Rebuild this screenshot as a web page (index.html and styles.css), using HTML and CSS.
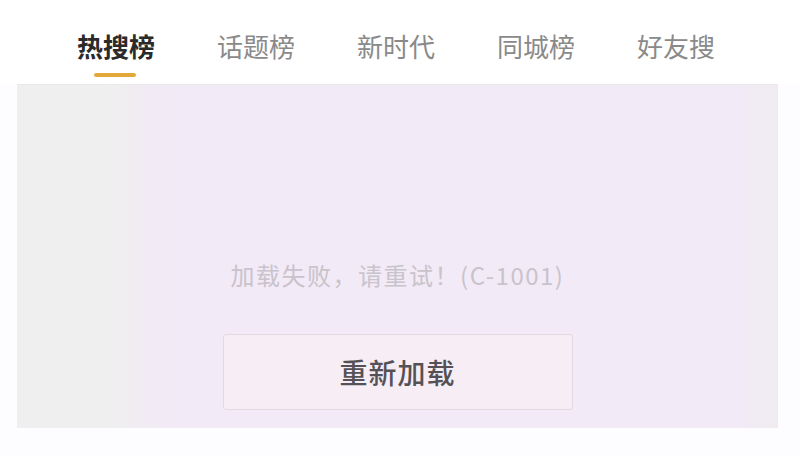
FILE: index.html
```html
<!DOCTYPE html>
<html>
<head>
    <title>热搜榜</title>
    <link rel="stylesheet" href="styles.css">
</head>
<body>
    <nav class="tabs">
        <a class="tab active">热搜榜</a>
        <a class="tab">话题榜</a>
        <a class="tab">新时代</a>
        <a class="tab">同城榜</a>
        <a class="tab">好友搜</a>
    </nav>

    <div class="panel">
        <p class="error">加载失败，请重试！(C-1001)</p>
        <button class="reload">重新加载</button>
    </div>
</body>
</html>
```

FILE: styles.css
```css
body { margin: 0; background: #fdfcfe; font-family: "Noto Sans CJK SC", "Noto Sans", sans-serif; width: 800px; height: 456px; overflow: hidden; }
.tabs { display: flex; padding: 0 0 0 46px; height: 84px; background: #fff; }
.tab { position: relative; width: 140px; text-align: center; font-size: 26px; line-height: 30px; padding-top: 31px; color: #8a8a8a; }
.tab.active { color: #2a2a2a; font-weight: bold; }
.tab.active::after { content: ""; position: absolute; left: 48px; top: 73px; width: 42px; height: 4px; border-radius: 2px; background: #e2a93a; }
.panel { margin: 0 22px 0 17px; height: 344px; background: linear-gradient(to right, #efefef 0, #efefef 90px, #f2eaf6 150px, #f2eaf6 720px, #efecf0 761px); border-top: 1px solid #e9e7ea; box-sizing: border-box; display: flex; flex-direction: column; align-items: center; padding-top: 175px; }
.error { margin: 0; font-size: 24px; line-height: 30px; color: #c9c3cc; letter-spacing: 1.5px; }
.reload { margin-top: 44px; width: 350px; height: 76px; border: 1px solid #e2d9e2; border-radius: 3px; background: #f6edf5; color: #555257; font-family: inherit; font-size: 28px; font-weight: 500; letter-spacing: 1px; cursor: pointer; }
```
